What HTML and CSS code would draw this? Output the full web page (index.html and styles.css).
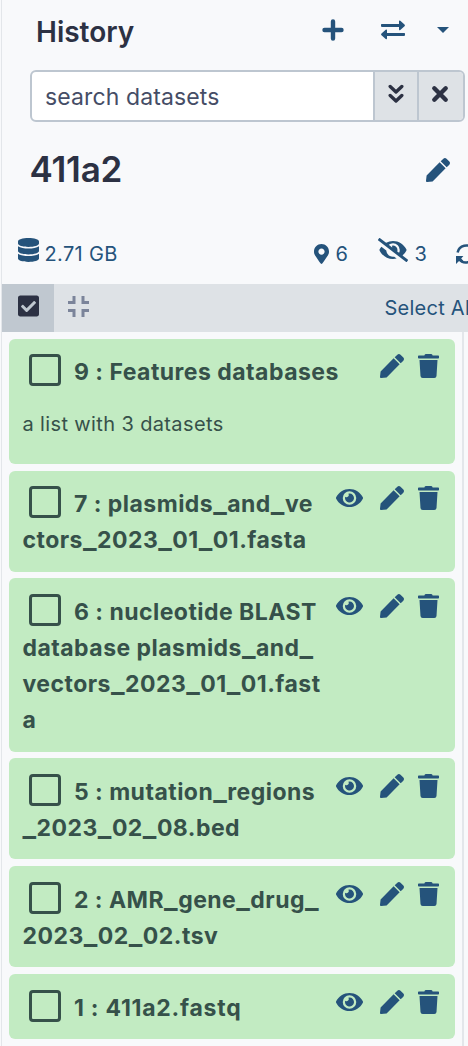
FILE: index.html
```html
<!DOCTYPE html>
<html lang="en">
<head>
<meta charset="utf-8">
<title>History</title>
<link rel="stylesheet" href="styles.css">
</head>
<body>
<svg class="sprite" aria-hidden="true">
  <symbol id="eye" viewBox="0 0 576 512"><path d="M572.52 241.4C518.29 135.59 410.93 64 288 64S57.68 135.64 3.48 241.41a32.35 32.35 0 0 0 0 29.19C57.71 376.41 165.07 448 288 448s230.32-71.64 284.52-177.41a32.35 32.35 0 0 0 0-29.19zM288 400a144 144 0 1 1 144-144 143.93 143.93 0 0 1-144 144zm0-240a95.31 95.31 0 0 0-25.31 3.79 47.85 47.85 0 0 1-66.9 66.9A95.78 95.78 0 1 0 288 160z"/></symbol>
  <symbol id="pen" viewBox="0 0 512 512"><path d="M290.74 93.24l128.02 128.02-277.99 277.99-114.14 12.6C11.35 513.54-1.56 500.62.14 485.34l12.7-114.22 277.9-277.88zm207.2-19.06l-60.11-60.11c-18.75-18.75-49.16-18.75-67.91 0l-56.55 56.55 128.02 128.02 56.55-56.55c18.75-18.76 18.75-49.16 0-67.91z"/></symbol>
  <symbol id="trash" viewBox="0 0 448 512"><path d="M432 32H312l-9.4-18.7A24 24 0 0 0 281.1 0H166.8a23.72 23.72 0 0 0-21.4 13.3L136 32H16A16 16 0 0 0 0 48v32a16 16 0 0 0 16 16h416a16 16 0 0 0 16-16V48a16 16 0 0 0-16-16zM32 128l21.2 339a48 48 0 0 0 47.9 45h245.8a48 48 0 0 0 47.9-45L416 128z"/></symbol>
</svg>
<main class="panel">
  <header class="head">
    <h1>History</h1>
    <div class="head-tools">
      <svg width="22" height="22" viewBox="0 0 22 22"><path class="plus" d="M11 2.500v17M2.500 11h17"/></svg>
      <svg width="24" height="20" viewBox="0 0 24 20"><path class="line" d="M1.2 5.4H19M22.8 14.4H5"/><path d="M18 1.5q0-1.6 1.3-.7l4.2 3.8q.8.8 0 1.6l-4.2 3.8q-1.3.8-1.3-.8zM6 10.5q0-1.6-1.3-.7L.5 13.6q-.8.8 0 1.6L4.7 19q1.3.8 1.3-.8z"/></svg>
      <svg width="12" height="6" viewBox="0 0 12 6"><path d="M0 0h12L6 6z"/></svg>
    </div>
  </header>
  <div class="search">
    <span class="field">search datasets</span>
    <span class="btn"><svg width="16" height="20" viewBox="0 0 16 20"><path class="chev" d="M2.2 2.5L8 8l5.8-5.5M2.2 11.5L8 17l5.8-5.5"/></svg></span>
    <span class="btn last"><svg width="18" height="18" viewBox="0 0 18 18"><path class="cross" d="M3.300 3.300l11.400 11.400M14.700 3.300L3.300 14.700"/></svg></span>
  </div>
  <div class="name"><h2>411a2</h2><svg class="i24"><use href="#pen"/></svg></div>
  <div class="stats">
    <svg class="db" viewBox="0 0 448 512"><path d="M448 73.143v45.714C448 159.143 347.667 192 224 192S0 159.143 0 118.857V73.143C0 32.857 100.333 0 224 0s224 32.857 224 73.143zM448 176v102.857C448 319.143 347.667 352 224 352S0 319.143 0 278.857V176c48.125 33.143 136.208 48.572 224 48.572S399.874 209.143 448 176zm0 160v102.857C448 479.143 347.667 512 224 512S0 479.143 0 438.857V336c48.125 33.143 136.208 48.572 224 48.572S399.874 369.143 448 336z"/></svg>
    <span class="size">2.71 GB</span>
    <svg class="pin" viewBox="0 0 384 512"><path d="M172.268 501.67C26.97 291.031 0 269.413 0 192 0 85.961 85.961 0 192 0s192 85.961 192 192c0 77.413-26.97 99.031-172.268 309.67-9.535 13.774-29.93 13.773-39.464 0zM192 272c44.183 0 80-35.817 80-80s-35.817-80-80-80-80 35.817-80 80 35.817 80 80 80z"/></svg>
    <span class="active">6</span>
    <svg class="hid" viewBox="0 0 640 512"><path d="M320 400c-75.85 0-137.25-58.71-142.9-133.11L72.2 185.82c-13.79 17.3-26.48 35.59-36.72 55.59a32.35 32.35 0 0 0 0 29.19C89.71 376.41 197.07 448 320 448c26.91 0 52.87-4 77.89-10.46L346 397.39a144.13 144.13 0 0 1-26 2.61zm313.82 58.1l-110.55-85.44a331.25 331.25 0 0 0 81.25-102.07 32.35 32.35 0 0 0 0-29.19C550.29 135.59 442.93 64 320 64a308.15 308.15 0 0 0-147.32 37.7L45.46 3.37A16 16 0 0 0 23 6.18L3.37 31.45A16 16 0 0 0 6.18 53.9l588.36 454.73a16 16 0 0 0 22.46-2.81l19.64-25.27a16 16 0 0 0-2.82-22.45zm-183.72-142l-39.3-30.38A94.75 94.75 0 0 0 416 256a94.76 94.76 0 0 0-121.31-92.21A47.65 47.65 0 0 1 304 192a46.64 46.64 0 0 1-1.54 10l-73.61-56.89A142.31 142.31 0 0 1 320 112a143.92 143.92 0 0 1 144 144c0 21.63-5.29 41.79-13.9 60.11z"/></svg>
    <span class="hidden-count">3</span>
    <svg class="sync" viewBox="0 0 20 20"><path class="arc" d="M1.6 8.5A8.6 8.6 0 0 1 17 5M18.4 11.5A8.6 8.6 0 0 1 3 15"/><path d="M0 12h7.4L5.2 14.5 7.5 17 6 18.5 3.5 16.5 0 20zM20 8h-7.4l2.2-2.5L12.500 3 14 1.500l2.500 2L20 0z"/></svg>
  </div>
  <div class="bar">
    <span class="sel"><svg width="21" height="24" viewBox="0 0 448 512"><path d="M400 480H48c-26.51 0-48-21.49-48-48V80c0-26.51 21.49-48 48-48h352c26.51 0 48 21.49 48 48v352c0 26.51-21.49 48-48 48zm-204.686-98.059l184-184c6.248-6.248 6.248-16.379 0-22.627l-22.627-22.627c-6.248-6.248-16.379-6.249-22.628 0L184 302.745l-70.059-70.059c-6.248-6.248-16.379-6.248-22.628 0l-22.627 22.627c-6.248 6.248-6.248 16.379 0 22.627l104 104c6.249 6.25 16.379 6.25 22.628.001z"/></svg></span>
    <svg class="compress" viewBox="0 0 21 21"><path d="M0 6.500h6V0M15 0v6.500H21M0 14.500h6V21M15 21v-6.500H21"/></svg>
    <span class="all">Select All</span>
  </div>
  <div class="list">
    <article class="item">
      <div class="title"><i class="box"></i>9 : Features databases</div>
      <div class="acts"><svg class="i24"><use href="#pen"/></svg><svg class="t24"><use href="#trash"/></svg></div>
      <p>a list with 3 datasets</p>
    </article>
    <article class="item">
      <div class="title"><i class="box"></i>7 : plasmids<b>_</b>and<b>_</b>ve<br>ctors<b>_</b>2023<b>_</b>01<b>_</b>01.fasta</div>
      <div class="acts"><svg class="e24"><use href="#eye"/></svg><svg class="i24"><use href="#pen"/></svg><svg class="t24"><use href="#trash"/></svg></div>
    </article>
    <article class="item low long">
      <div class="title"><i class="box"></i>6 : nucleotide BLAST<br>database plasmids<b>_</b>and<b>_</b><br>vectors<b>_</b>2023<b>_</b>01<b>_</b>01.fast<br>a</div>
      <div class="acts"><svg class="e24"><use href="#eye"/></svg><svg class="i24"><use href="#pen"/></svg><svg class="t24"><use href="#trash"/></svg></div>
    </article>
    <article class="item low">
      <div class="title"><i class="box"></i>5 : mutation<b>_</b>regions<br><b>_</b>2023<b>_</b>02<b>_</b>08.bed</div>
      <div class="acts"><svg class="e24"><use href="#eye"/></svg><svg class="i24"><use href="#pen"/></svg><svg class="t24"><use href="#trash"/></svg></div>
    </article>
    <article class="item low">
      <div class="title"><i class="box"></i>2 : AMR<b>_</b>gene<b>_</b>drug<b>_</b><br>2023<b>_</b>02<b>_</b>02.tsv</div>
      <div class="acts"><svg class="e24"><use href="#eye"/></svg><svg class="i24"><use href="#pen"/></svg><svg class="t24"><use href="#trash"/></svg></div>
    </article>
    <article class="item low">
      <div class="title spaced"><i class="box"></i>1 : 411a2.fastq</div>
      <div class="acts"><svg class="e24"><use href="#eye"/></svg><svg class="i24"><use href="#pen"/></svg><svg class="t24"><use href="#trash"/></svg></div>
    </article>
  </div>
</main>
</body>
</html>
```
FILE: styles.css
```css
* { box-sizing: border-box; }
body { margin: 0; width: 468px; height: 1046px; overflow: hidden; background: #f8f9fb; font-family: Inter, "Liberation Sans", sans-serif; color: #2c3143; }
h1, h2, p { margin: 0; }
svg { display: block; flex: none; fill: #25537b; }
.sprite { display: none; }
.panel { height: 1046px; margin-left: 1px; border-left: 1px solid #e3e6ea; white-space: nowrap; overflow: hidden; }
.head { display: flex; height: 70px; align-items: flex-start; padding: 14px 19px 0 34px; justify-content: space-between; }
h1 { font-size: 28px; line-height: 36px; font-weight: 600; }
.head-tools { display: flex; align-items: center; height: 32px; }
.head-tools svg + svg { margin-left: 37px; }
.head-tools svg + svg + svg { margin-left: 32px; }
.plus { stroke: #25537b; stroke-width: 4.400; stroke-linecap: round; }
.line { stroke: #25537b; stroke-width: 3; stroke-linecap: round; }
.search { display: flex; width: 435px; height: 52px; margin-left: 28px; border: 2px solid #bdc6d0; border-radius: 6px; background: #fff; overflow: hidden; }
.field { flex: 1; padding-left: 13px; font-size: 23px; line-height: 50px; letter-spacing: 0.12px; color: #454d66; }
.btn { display: flex; width: 44px; padding: 12px 0 0 12.500px; background: #dee2e6; border-left: 2px solid #bdc6d0; }
.btn.last { width: 46px; padding: 12.500px 0 0 12px; }
.chev, .cross { fill: none; stroke: #2c3143; stroke-width: 3.400; stroke-linecap: round; stroke-linejoin: round; }
.cross { stroke-width: 4.400; }
.name { display: flex; height: 110px; padding: 26px 18px 0 27.500px; justify-content: space-between; }
h2 { font-size: 35px; line-height: 42px; font-weight: 600; letter-spacing: -0.2px; }
.name .i24 { margin-top: 10px; }
.i24 { width: 24px; height: 24px; }
.t24 { width: 21px; height: 24px; }
.e24 { width: 27px; height: 24px; }
.stats { display: flex; height: 52px; padding: 6px 0 0 16px; font-size: 20px; line-height: 33px; letter-spacing: 0.35px; color: #25537b; }
.stats span { flex: none; }
.db { width: 21px; height: 24px; }
.size { width: 269px; padding-left: 5.500px; }
.pin { width: 15px; height: 20px; margin: 5.500px 0 0 6px; }
.active { width: 49px; padding-left: 6.500px; }
.hid { width: 30px; height: 24px; }
.hidden-count { width: 48px; padding-left: 6.500px; }
.sync { width: 20px; height: 20px; margin-top: 6px; }
.arc { fill: none; stroke: #25537b; stroke-width: 2.500; }
.bar { display: flex; height: 48px; background: #dee2e6; }
.sel { flex: none; width: 52px; padding: 10px 0 0 16px; background: #c0c8d0; }
.sel svg { fill: #2c3143; }
.compress { width: 21px; height: 21px; margin: 11.500px 0 0 14px; }
.compress path { fill: none; stroke: #7b849a; stroke-width: 3; }
.all { flex: none; margin-left: 295.500px; font-size: 20px; line-height: 48px; letter-spacing: 0.25px; color: #25537b; }
.list { display: flex; flex-direction: column; gap: 6.700px; width: 462px; height: 714px; padding: 7px 7px 0; border-right: 2px solid #e3e6ea; }
.item { display: grid; grid-template-columns: 1fr auto; width: 446px; padding: 15px 16px 14px 13.500px; background: #c2ebc2; border-radius: 6px; }
.item.low { padding-top: 16px; padding-bottom: 13px; }
.item.long { padding-bottom: 13.300px; }
.title { font-size: 23px; line-height: 36px; font-weight: 700; letter-spacing: 0.47px; color: #36514a; }
.title.spaced { letter-spacing: 0.75px; }
/* Underscores are drawn wider than the surrounding letters. */
.title b { font-size: 29px; line-height: 0; font-weight: 600; }
.box { display: inline-block; width: 32px; height: 32px; margin: -2px 13.500px -2px 6px; border: 3px solid #36514a; border-radius: 4px; vertical-align: -6px; position: relative; top: -2px; }
.acts { display: flex; gap: 17px; }
.acts .t24 { margin-left: -3px; }
.item p { grid-column: 1 / 3; margin-top: 18px; font-size: 20px; line-height: 32px; height: 42px; letter-spacing: 0.37px; color: #36514a; }
```
